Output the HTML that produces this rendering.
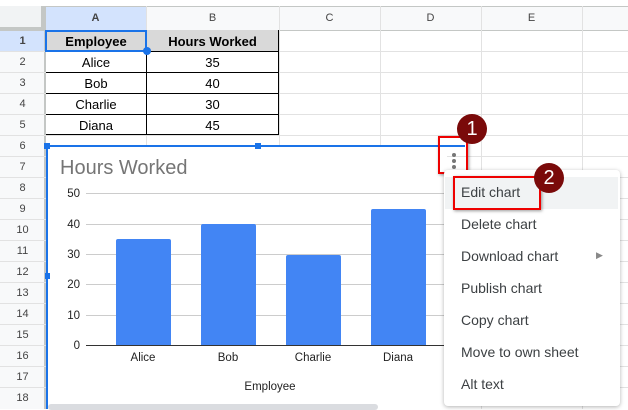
<!DOCTYPE html><html><head><style>
body{margin:0;width:628px;height:409px;overflow:hidden;background:#fff;font-family:"Liberation Sans",Arial,sans-serif;position:relative}
.a{position:absolute}
.hl{position:absolute;height:1px;background:#e2e2e2;left:0;width:628px}
.vl{position:absolute;width:1px;background:#e2e2e2;top:6px;height:403px}
.rn{position:absolute;left:0;width:45px;text-align:center;font-size:11px;color:#444}
.ch{position:absolute;top:6px;height:24px;line-height:24px;text-align:center;font-size:11px;color:#444}
.cell{position:absolute;height:21px;line-height:23px;text-align:center;font-size:13px;color:#000}
.yl{position:absolute;left:50px;width:30px;text-align:right;font-size:11.5px;color:#222}
.gl{position:absolute;left:86px;width:360px;height:1px;background:#ccc}
.bar{position:absolute;width:55px;background:#4285f4;border-radius:2px 2px 0 0}
.xl{position:absolute;top:352px;font-size:11.5px;color:#222;text-align:center;width:80px}
.mi{position:absolute;left:461px;font-size:14px;color:#3c4043}
</style></head><body>
<div class="a" style="left:0;top:6px;width:628px;height:24px;background:#f8f9fa"></div>
<div class="a" style="left:0;top:6px;width:45px;height:403px;background:#f8f9fa"></div>
<div class="a" style="left:45px;top:6px;width:101px;height:24px;background:#d3e3fd"></div>
<div class="a" style="left:0;top:30px;width:45px;height:21px;background:#d3e3fd"></div>
<div class="a" style="left:0;top:6px;width:628px;height:1px;background:#c4c7c5"></div>
<div class="a" style="left:0;top:30px;width:628px;height:1px;background:#c4c7c5"></div>
<div class="a" style="left:44px;top:6px;width:2px;height:403px;background:#c4c7c5"></div>
<div class="a" style="left:0;top:6px;width:44px;height:24px;background:#f1f3f4;border-right:3px solid #c4c7c5;border-bottom:3px solid #c4c7c5;box-sizing:border-box"></div>
<div class="vl" style="left:146px"></div><div class="vl" style="left:279px"></div><div class="vl" style="left:380px"></div><div class="vl" style="left:481px"></div><div class="vl" style="left:582px"></div>
<div class="hl" style="top:51px"></div><div class="hl" style="top:72px"></div><div class="hl" style="top:93px"></div><div class="hl" style="top:114px"></div><div class="hl" style="top:135px"></div><div class="hl" style="top:156px"></div><div class="hl" style="top:177px"></div><div class="hl" style="top:198px"></div><div class="hl" style="top:219px"></div><div class="hl" style="top:240px"></div><div class="hl" style="top:261px"></div><div class="hl" style="top:282px"></div><div class="hl" style="top:303px"></div><div class="hl" style="top:324px"></div><div class="hl" style="top:345px"></div><div class="hl" style="top:366px"></div><div class="hl" style="top:387px"></div>
<div class="ch" style="left:45px;width:101px;font-weight:bold">A</div><div class="ch" style="left:146px;width:133px">B</div><div class="ch" style="left:279px;width:101px">C</div><div class="ch" style="left:380px;width:101px">D</div><div class="ch" style="left:481px;width:101px">E</div>
<div class="rn" style="top:35px;font-weight:bold">1</div><div class="rn" style="top:56px">2</div><div class="rn" style="top:77px">3</div><div class="rn" style="top:98px">4</div><div class="rn" style="top:119px">5</div><div class="rn" style="top:140px">6</div><div class="rn" style="top:161px">7</div><div class="rn" style="top:182px">8</div><div class="rn" style="top:203px">9</div><div class="rn" style="top:224px">10</div><div class="rn" style="top:245px">11</div><div class="rn" style="top:266px">12</div><div class="rn" style="top:287px">13</div><div class="rn" style="top:308px">14</div><div class="rn" style="top:329px">15</div><div class="rn" style="top:350px">16</div><div class="rn" style="top:371px">17</div><div class="rn" style="top:392px">18</div>
<div class="a" style="left:46px;top:30px;width:233px;height:21px;background:#d9d9d9"></div>
<div class="a" style="left:46px;top:30px;width:233px;height:105px;border-right:1px solid #000;border-bottom:1px solid #000;box-sizing:border-box"></div>
<div class="a" style="left:146px;top:30px;width:1px;height:105px;background:#000"></div>
<div class="a" style="left:46px;top:51px;width:233px;height:1px;background:#000"></div><div class="a" style="left:46px;top:72px;width:233px;height:1px;background:#000"></div><div class="a" style="left:46px;top:93px;width:233px;height:1px;background:#000"></div><div class="a" style="left:46px;top:114px;width:233px;height:1px;background:#000"></div>
<div class="a" style="left:45px;top:30px;width:102px;height:22px;border:2px solid #1a73e8;box-sizing:border-box"></div>
<div class="a" style="left:143px;top:47px;width:8px;height:8px;border-radius:50%;background:#1a73e8"></div>
<div class="cell" style="left:46px;top:30px;width:100px;font-weight:bold">Employee</div><div class="cell" style="left:146px;top:30px;width:133px;font-weight:bold">Hours Worked</div>
<div class="cell" style="left:46px;top:51px;width:100px">Alice</div><div class="cell" style="left:146px;top:51px;width:133px">35</div>
<div class="cell" style="left:46px;top:72px;width:100px">Bob</div><div class="cell" style="left:146px;top:72px;width:133px">40</div>
<div class="cell" style="left:46px;top:93px;width:100px">Charlie</div><div class="cell" style="left:146px;top:93px;width:133px">30</div>
<div class="cell" style="left:46px;top:114px;width:100px">Diana</div><div class="cell" style="left:146px;top:114px;width:133px">45</div>
<!-- chart -->
<div class="a" style="left:47px;top:146px;width:400px;height:263px;background:#fff"></div>
<div class="a" style="left:46px;top:146px;width:2px;height:263px;background:#1a73e8"></div>
<div class="a" style="left:47px;top:145px;width:418px;height:2px;background:#1a73e8"></div>
<div class="a" style="left:44px;top:143px;width:6px;height:6px;background:#1a73e8"></div>
<div class="a" style="left:255px;top:143px;width:6px;height:6px;background:#1a73e8"></div>
<div class="a" style="left:45px;top:273px;width:5px;height:6px;background:#1a73e8"></div>
<div class="a" style="left:60px;top:157px;font-size:20px;color:#757575">Hours Worked</div>
<div class="gl" style="top:193px"></div><div class="gl" style="top:224px"></div><div class="gl" style="top:254px"></div><div class="gl" style="top:284px"></div><div class="gl" style="top:315px"></div>
<div class="yl" style="top:188px">50</div><div class="yl" style="top:219px">40</div><div class="yl" style="top:249px">30</div><div class="yl" style="top:279px">20</div><div class="yl" style="top:310px">10</div><div class="yl" style="top:340px">0</div>
<div class="bar" style="left:116px;top:239px;height:106px"></div>
<div class="bar" style="left:201px;top:224px;height:121px"></div>
<div class="bar" style="left:286px;top:255px;height:90px"></div>
<div class="bar" style="left:371px;top:209px;height:136px"></div>
<div class="a" style="left:86px;top:345px;width:360px;height:1px;background:#333"></div>
<div class="xl" style="left:103px">Alice</div><div class="xl" style="left:188px">Bob</div><div class="xl" style="left:273px">Charlie</div><div class="xl" style="left:358px">Diana</div>
<div class="a" style="left:230px;top:381px;width:80px;text-align:center;font-size:11.5px;color:#222">Employee</div>
<div class="a" style="left:48px;top:404px;width:330px;height:6px;background:#dadce0;border-radius:3px"></div>
<!-- dots -->
<div class="a" style="left:452px;top:153px;width:4px;height:4px;border-radius:50%;background:#777"></div>
<div class="a" style="left:452px;top:159px;width:4px;height:4px;border-radius:50%;background:#777"></div>
<div class="a" style="left:452px;top:165px;width:4px;height:4px;border-radius:50%;background:#777"></div>
<div class="a" style="left:438px;top:136px;width:30px;height:38px;border:2px solid #e00;box-sizing:border-box;box-shadow:1px 1px 3px rgba(0,0,0,.4)"></div>
<!-- menu -->
<div class="a" style="left:444px;top:170px;width:176px;height:236px;background:#fff;border-radius:4px;box-shadow:0 1px 4px rgba(0,0,0,.3)"></div>
<div class="a" style="left:445px;top:177px;width:173px;height:32px;background:#f1f3f4"></div>
<div class="mi" style="top:184px">Edit chart</div>
<div class="mi" style="top:216px">Delete chart</div>
<div class="mi" style="top:248px">Download chart</div>
<div class="a" style="left:596px;top:250px;font-size:9px;color:#888">&#9654;</div>
<div class="mi" style="top:280px">Publish chart</div>
<div class="mi" style="top:312px">Copy chart</div>
<div class="mi" style="top:344px">Move to own sheet</div>
<div class="mi" style="top:376px">Alt text</div>
<div class="a" style="left:453px;top:176px;width:88px;height:34px;border:2px solid #e00;box-sizing:border-box;box-shadow:1px 1px 3px rgba(0,0,0,.4)"></div>
<div class="a" style="left:457px;top:114px;width:30px;height:30px;border-radius:50%;background:#7a0a0a;color:#fff;font-size:20px;line-height:30px;text-align:center">1</div>
<div class="a" style="left:534px;top:163px;width:30px;height:30px;border-radius:50%;background:#7a0a0a;color:#fff;font-size:20px;line-height:30px;text-align:center">2</div>
</body></html>
